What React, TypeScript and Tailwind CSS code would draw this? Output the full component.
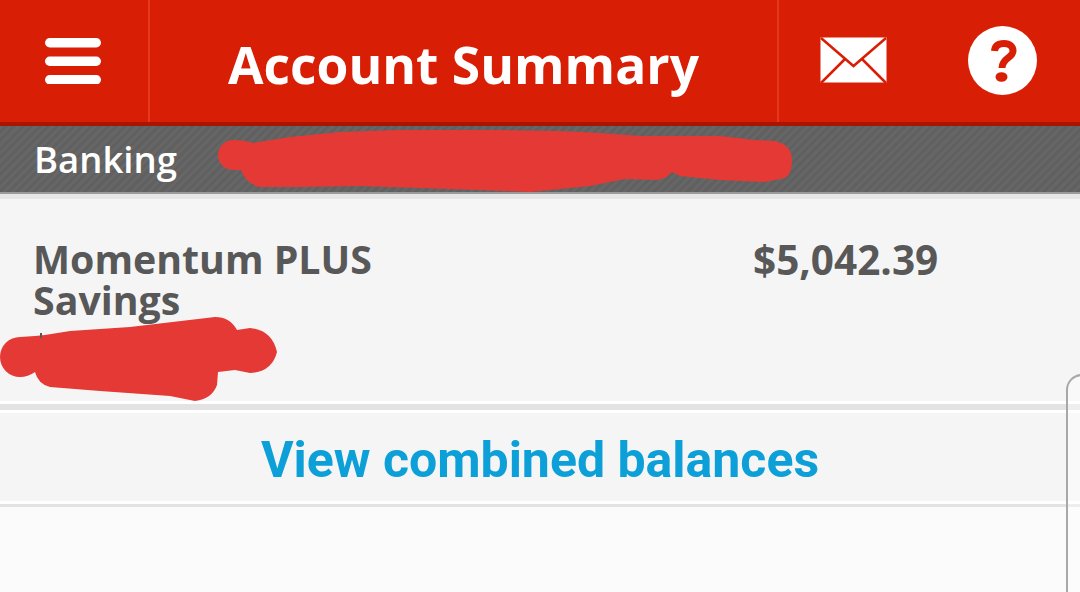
import React from 'react';

const openSans = { fontFamily: '"Open Sans", sans-serif' };

const MenuIcon = () => (
  <svg width="58" height="46" viewBox="0 0 58 46">
    <rect x="1" y="0" width="56" height="9.5" rx="4.7" fill="#fff" />
    <rect x="1" y="18.5" width="56" height="9.5" rx="4.7" fill="#fff" />
    <rect x="1" y="37" width="56" height="9.5" rx="4.7" fill="#fff" />
  </svg>
);

const MailIcon = () => (
  <svg width="68" height="48" viewBox="0 0 68 48">
    <rect x="0.5" y="0.5" width="66" height="45" fill="#fff" />
    <path d="M1 1 L33.5 29 L66 1" fill="none" stroke="#d81e05" strokeWidth="2.5" />
    <path d="M1 46 L25 22 M66 46 L42 22" fill="none" stroke="#d81e05" strokeWidth="2.5" />
  </svg>
);

const HelpIcon = () => (
  <svg width="70" height="70" viewBox="0 0 70 70">
    <circle cx="34.5" cy="34.5" r="34.5" fill="#fff" />
    <path d="M26.5 25 C27 19.5 31 17.5 36 17.5 C42 17.5 45 20.5 45 25 C45 32 34 32 34 42" fill="none" stroke="#d81e05" strokeWidth="7" />
    <ellipse cx="33.5" cy="51" rx="6" ry="4.8" fill="#d81e05" />
  </svg>
);

const Divider = ({ className }: { className: string }) => <div className={className} />;

export default function App() {
  return (
    <div className="relative flex h-[592px] w-[1080px] flex-col overflow-hidden bg-[#fbfbfb]" style={openSans}>
      <header className="flex h-[126px] shrink-0 border-b-4 border-[#a81503] bg-[#d81e05]">
        <div className="flex w-[150px] items-center border-r-2 border-[#e5391f] pl-[44px]">
          <MenuIcon />
        </div>
        <div className="flex w-[629px] items-center border-r-2 border-[#e5391f] pl-[78px] pt-[7px]">
          <h1 className="text-[51.5px] font-bold leading-none text-white">Account Summary</h1>
        </div>
        <div className="flex flex-1 items-center pl-[41px]">
          <MailIcon />
          <div className="ml-[80px]">
            <HelpIcon />
          </div>
        </div>
      </header>

      <div className="flex h-[68px] shrink-0 items-center border-b-2 border-[#9a9a9a] bg-[#636363] bg-[repeating-linear-gradient(135deg,#666666_0px,#666666_3px,#606060_3px,#606060_6px)] pl-[34px]">
        <span className="text-[36.5px] font-semibold leading-none text-white">Banking</span>
      </div>
      <Divider className="h-[5px] shrink-0 bg-[#e6e6e6]" />

      <div className="flex h-[202px] shrink-0 items-start bg-[#f5f5f5] pl-[33px] pt-[40px]">
        <div className="w-[720px] text-[39.3px] font-bold leading-[41px] text-[#585858]">
          Momentum PLUS
          <br />
          Savings
        </div>
        <div className="text-[40.5px] font-bold leading-[41px] text-[#585858]">$5,042.39</div>
      </div>
      <Divider className="h-[3px] shrink-0 bg-white" />
      <Divider className="h-[6px] shrink-0 bg-[#e3e3e3]" />

      <div className="flex h-[91px] shrink-0 items-center justify-center border-t-[3px] border-white bg-[#f5f5f5] pt-[5px]">
        <span className="text-[50px] font-bold leading-none text-[#0da0d8]" style={{ fontFamily: 'Roboto, sans-serif' }}>
          View combined balances
        </span>
      </div>
      <Divider className="h-[3px] shrink-0 bg-white" />
      <Divider className="h-[3px] shrink-0 bg-[#e3e3e3]" />

      {/* scribbles drawn over the account numbers */}
      <svg className="absolute left-0 top-0" width="1080" height="592" viewBox="0 0 1080 592">
        <path
          fill="#e53935"
          d="M233 140 Q245 140 253 143 L290 137 L340 132 L400 130 L500 130 L560 131 L600 133 L640 136 L720 136 L755 140 L775 141 Q792 145 792 160 Q792 174 785 178 L765 182 L720 180 L680 176 L672 172 Q665 180 655 180 L625 179 L590 186 L550 190 L530 192 L480 190 L420 188 L360 186 L300 187 L260 187 Q246 184 241 170 L233 170 A15 15 0 0 1 233 140 Z"
        />
        <path
          fill="#e53935"
          d="M20 337 L35 336 L45 335 L70 331 L130 327 L215 317 Q230 317 237 330 L250 328 Q272 330 277 352 Q272 372 250 373 L235 370 L218 372 L217 385 Q212 399 195 401 L170 396 L100 391 L50 387 Q38 384 35 372 Q28 377 20 377 A20 20 0 0 1 20 337 Z"
        />
        <path d="M41 333 L41 338" stroke="#585858" strokeWidth="2" />
      </svg>

      {/* edge of the floating panel */}
      <div className="absolute left-[1066px] top-[374px] h-[240px] w-[40px] rounded-tl-[16px] border-l-2 border-t-2 border-[#a8a8a8] bg-white/40" />
    </div>
  );
}
